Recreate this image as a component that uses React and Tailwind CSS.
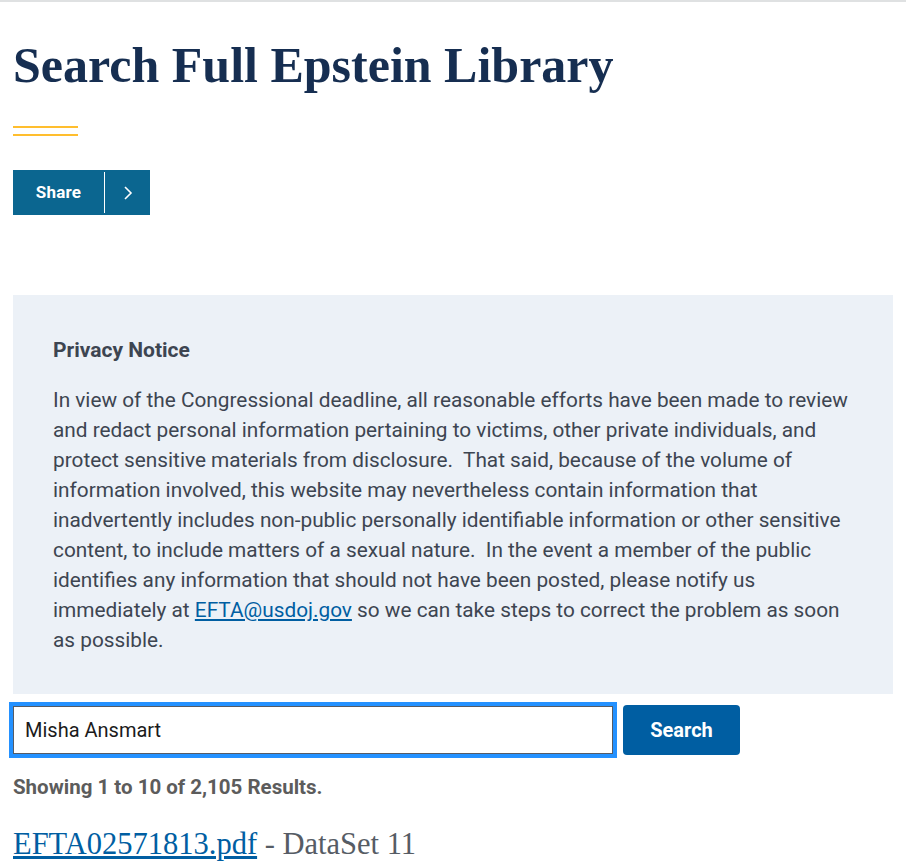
export default function App() {
  const sans = { fontFamily: 'Roboto, "Liberation Sans", sans-serif' };
  const serif = { fontFamily: '"Liberation Serif", serif' };
  return (
    <div className="min-h-[864px] bg-white border-t-2 border-[#dfe1e2]" style={sans}>
      <div className="px-[13px]">
        <h1 className="pt-[34px] text-[50px] leading-[58px] font-bold text-[#162e51]" style={serif}>
          Search Full Epstein Library
        </h1>

        <div className="mt-[32px] w-[65px] flex flex-col gap-[6px]">
          <div className="h-[2px] bg-[#ffbe2e]" />
          <div className="h-[2px] bg-[#ffbe2e]" />
        </div>

        <div className="mt-[34px] flex h-[45px] w-[137px] bg-[#0b6690] text-white">
          <div className="flex w-[91px] items-center justify-center text-[17px] font-bold tracking-[0.2px]">
            Share
          </div>
          <div className="my-[2px] w-px bg-white" />
          <div className="flex flex-1 items-center justify-center">
            <svg width="10" height="14" viewBox="0 0 10 14" fill="none" stroke="white" strokeWidth="1.6">
              <path d="M2 1l6 6-6 6" />
            </svg>
          </div>
        </div>

        <div className="mt-[80px] w-[880px] bg-[#ecf1f7] px-[40px] pt-[40px] pb-[39px] text-[#3d4551]">
          <p className="text-[21px] font-bold leading-[30px]">Privacy Notice</p>
          <p className="mt-[20px] whitespace-nowrap text-[20.8px] leading-[30px]">
            In view of the Congressional deadline, all reasonable efforts have been made to review
            <br />
            and redact personal information pertaining to victims, other private individuals, and
            <br />
            protect sensitive materials from disclosure.&nbsp; That said, because of the volume of
            <br />
            information involved, this website may nevertheless contain information that
            <br />
            inadvertently includes non-public personally identifiable information or other sensitive
            <br />
            content, to include matters of a sexual nature.&nbsp; In the event a member of the public
            <br />
            identifies any information that should not have been posted, please notify us
            <br />
            immediately at{' '}
            <a href="#" className="text-[#005ea2] underline">
              EFTA@usdoj.gov
            </a>{' '}
            so we can take steps to correct the problem as soon
            <br />
            as possible.
          </p>
        </div>

        <div className="mt-[11px] flex items-center gap-[10px]">
          <input
            type="text"
            defaultValue="Misha Ansmart"
            className="h-[48px] w-[600px] border border-[#565c65] bg-white px-[11px] text-[20px] text-[#1b1b1b] outline-none ring-4 ring-[#2491ff]"
          />
          <button className="h-[50px] w-[117px] rounded-[4px] bg-[#005ea2] text-[20px] font-bold text-white">
            Search
          </button>
        </div>

        <p className="mt-[17px] text-[20.5px] font-bold leading-[30px] text-[#5c5c5c]">
          Showing 1 to 10 of 2,105 Results.
        </p>

        <p className="mt-[22px] text-[30.5px] leading-[40px] text-[#565c65]" style={serif}>
          <a href="#" className="text-[#005ea2] underline">
            EFTA02571813.pdf
          </a>{' '}
          - DataSet 11
        </p>
      </div>
    </div>
  );
}
